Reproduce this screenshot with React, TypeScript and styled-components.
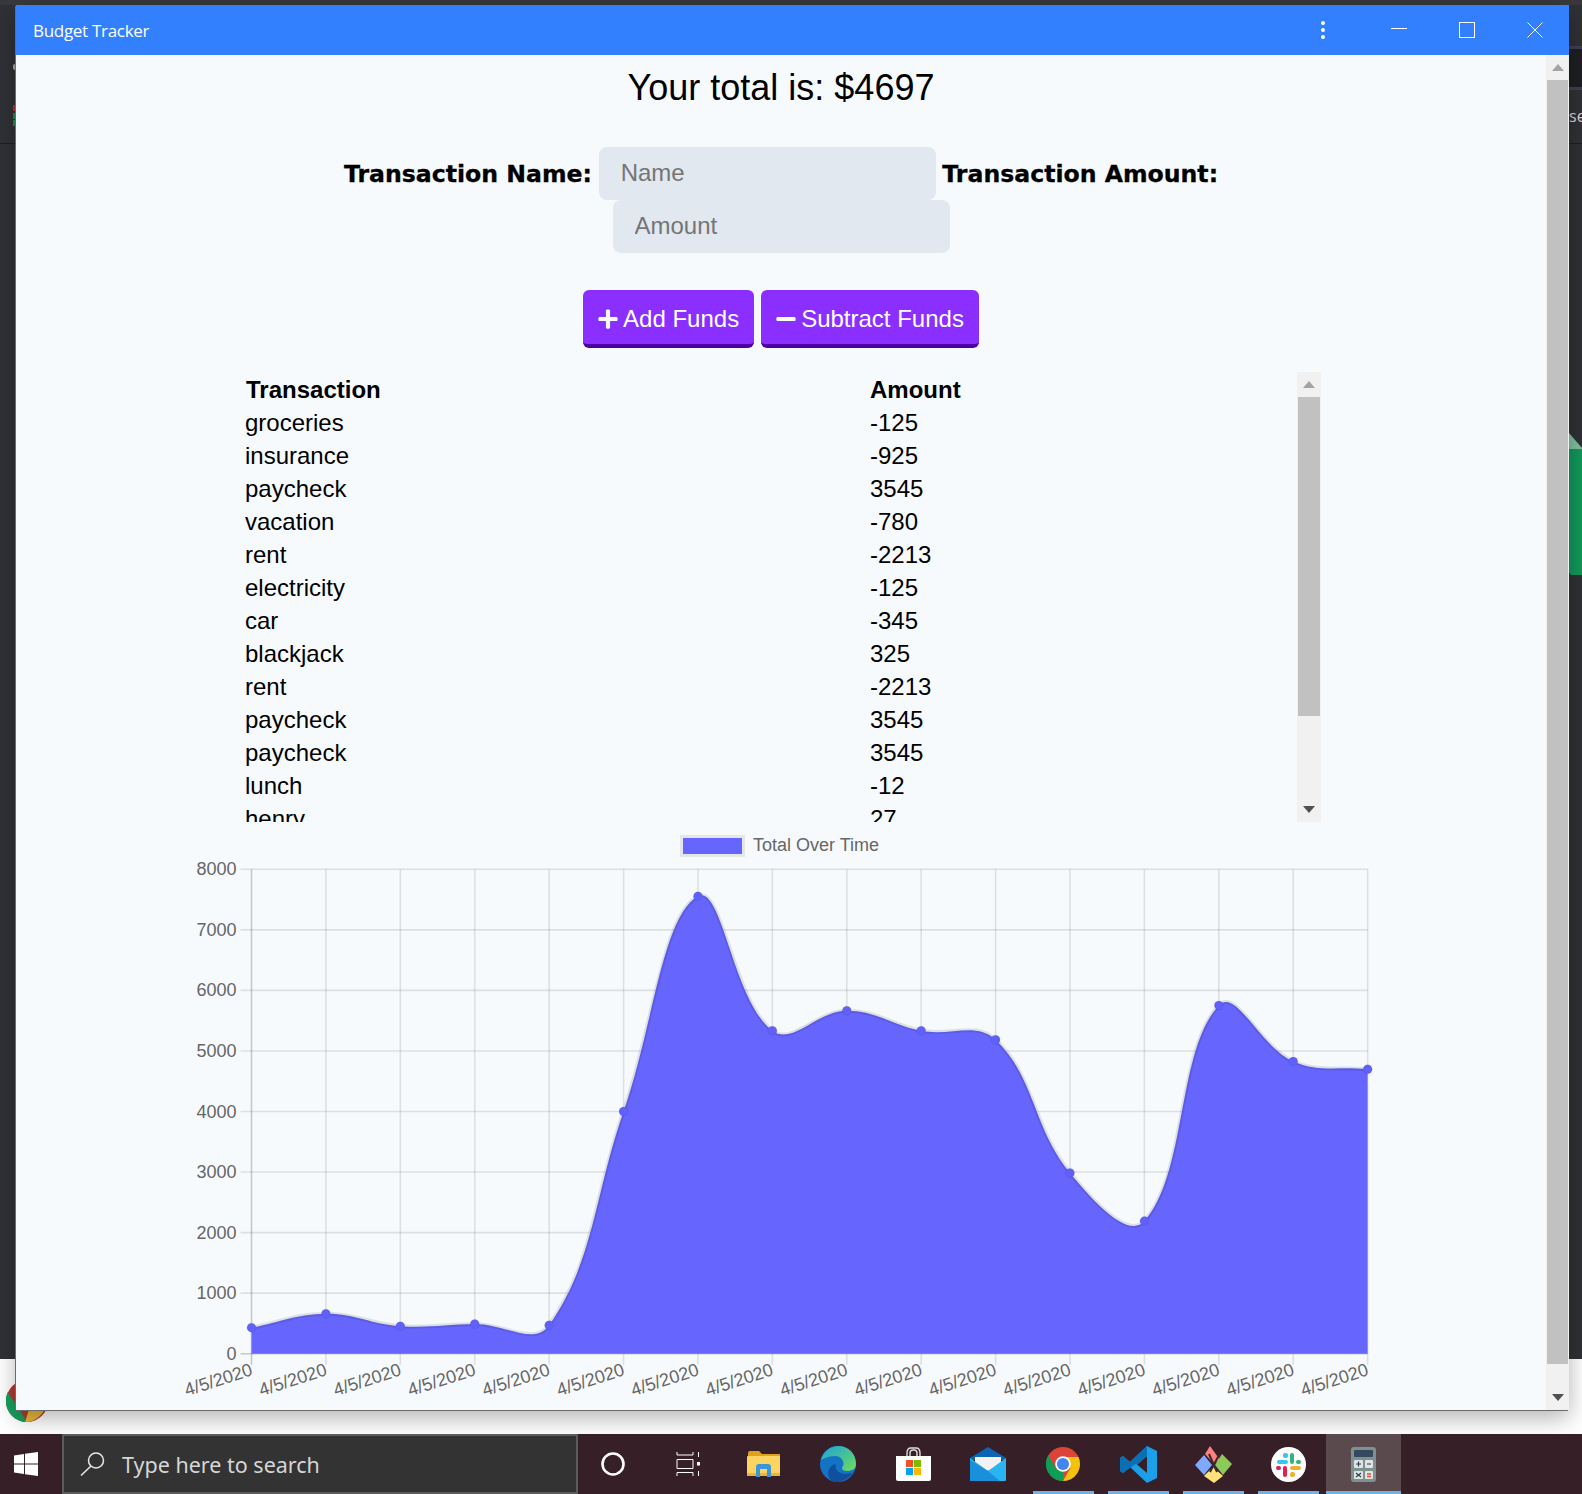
import React from "react";
import styled, { createGlobalStyle } from "styled-components";
import { FaPlus, FaMinus } from "react-icons/fa";

const Global = createGlobalStyle`
  html, body { margin: 0; padding: 0; background: #fff; }
  * { box-sizing: border-box; }
`;

const Desktop = styled.div`
  position: relative;
  width: 1582px;
  height: 1494px;
  overflow: hidden;
  display: flex;
  flex-direction: column;
  background: #fff;
  font-family: "Liberation Sans", Arial, sans-serif;
`;
const Workspace = styled.div`
  position: relative;
  flex: 1;
`;
const Backdrop = styled.div`
  position: absolute;
  left: 0;
  top: 0;
  width: 100%;
  height: 1359px;
  background: #2f3136;
`;
const BackTopBar = styled.div`
  position: absolute;
  left: 0;
  top: 0;
  width: 100%;
  height: 5px;
  background: #37393d;
`;
const BackSideLine = styled.div`
  position: absolute;
  left: 0;
  top: 143px;
  width: 100%;
  height: 1px;
  background: #1d1e20;
`;
const BackPanel = styled.div`
  position: absolute;
  right: 0;
  top: 46px;
  width: 13px;
  height: 44px;
  background: #1e1f22;
  border-top: 3px solid #3d4250;
  border-bottom: 3px solid #3d4250;
`;
const BackText = styled.div`
  position: absolute;
  right: -3px;
  top: 105px;
  width: 16px;
  overflow: hidden;
  font: 16px "Open Sans", sans-serif;
  color: #d6d6d6;
`;
const BackTick = styled.div<{ $top: number; $color: string }>`
  position: absolute;
  left: 13px;
  top: ${(p) => p.$top}px;
  width: 3px;
  height: 6px;
  background: ${(p) => p.$color};
`;
const BackDot = styled.div`
  position: absolute;
  left: 13px;
  top: 64px;
  width: 4px;
  height: 6px;
  background: #a8a8a8;
  border-radius: 2px 0 0 2px;
`;
const GreenTab = styled.div`
  position: absolute;
  right: 0;
  top: 433px;
  width: 13px;
  height: 142px;
  background: linear-gradient(to bottom, #7fbf9f 0, #7fbf9f 16px, #12985a 16px);
  clip-path: polygon(0 0, 100% 15px, 100% 100%, 2px 100%, 0 98%);
`;
const ChromeBehind = styled.svg`
  position: absolute;
  left: 6px;
  top: 1380px;
`;

const Window = styled.div`
  position: absolute;
  left: 16px;
  top: 5px;
  width: 1553px;
  height: 1405px;
  display: flex;
  flex-direction: column;
  background: #f7fafc;
  box-shadow: -1px 1px 0 #6b6b6b, 0 8px 22px rgba(0, 0, 0, 0.3);
`;
const TitleBar = styled.div`
  height: 50px;
  flex: none;
  display: flex;
  align-items: center;
  background: #3280fe;
  color: #fff;
`;
const TitleText = styled.div`
  flex: 1;
  padding: 0 0 0 17px;
  font: 400 17px "Open Sans", sans-serif;
  letter-spacing: -0.3px;
`;
const TitleIcon = styled.svg`
  display: block;
  flex: none;
`;
const Dots = styled(TitleIcon)`
  margin-right: 65px;
`;
const WinBtn = styled(TitleIcon)`
  margin-right: 52px;
`;
const LastBtn = styled(TitleIcon)`
  margin-right: 26px;
`;
const WinBody = styled.div`
  flex: 1;
  min-height: 0;
  display: flex;
`;
const Content = styled.main`
  flex: 1;
  min-width: 0;
  display: flex;
  flex-direction: column;
  align-items: center;
  color: #000;
`;
const Total = styled.h1`
  margin: 12px 0 0;
  font-size: 36px;
  line-height: 41px;
  font-weight: 400;
`;
const Form = styled.form`
  width: 1000px;
  margin-top: 39px;
  text-align: center;
  font-size: 24px;
  line-height: 0;
`;
const Label = styled.label`
  display: inline-block;
  vertical-align: middle;
  padding-top: 1px;
  height: 53px;
  font: bold 23.6px "DejaVu Sans", sans-serif;
  line-height: 53px;
  -webkit-text-stroke: 0.3px #000;
`;
const Input = styled.input`
  display: inline-block;
  vertical-align: middle;
  width: 337px;
  height: 53px;
  padding: 0 22px 1px;
  border: 0;
  border-radius: 8px;
  background: #e2e8f0;
  font: 24px "Liberation Sans", Arial, sans-serif;
  outline: none;
  &::placeholder { color: #757575; opacity: 1; }
`;
const Buttons = styled.div`
  display: flex;
  gap: 7px;
  margin-top: 37px;
`;
const Button = styled.button`
  display: flex;
  align-items: center;
  gap: 4.5px;
  height: 58px;
  padding: 3px 15px 0 13.5px;
  border: 0;
  border-bottom: 4px solid #4c00a4;
  border-radius: 6px;
  background: #8a2fff;
  color: #fff;
  font: 24px "Liberation Sans", Arial, sans-serif;
`;
const Ledger = styled.section`
  width: 1080px;
  height: 450px;
  margin-top: 24px;
  display: flex;
  flex: none;
`;
const LedgerRows = styled.div`
  flex: 1;
  min-width: 0;
  overflow: hidden;
  padding-top: 1px;
`;
const Row = styled.div`
  display: grid;
  grid-template-columns: 625px 1fr;
  height: 33px;
  padding-left: 4px;
  font-size: 24px;
  line-height: 33px;
`;
const HeadRow = styled(Row)`
  font-weight: 700;
  padding-left: 5px;
  grid-template-columns: 624px 1fr;
`;
const Scrollbar = styled.div<{ $w: number }>`
  flex: none;
  width: ${(p) => p.$w}px;
  display: flex;
  flex-direction: column;
  background: #f1f1f1;
`;
const ScrollArrow = styled.div<{ $h: number }>`
  flex: none;
  height: ${(p) => p.$h}px;
  display: flex;
  align-items: center;
  justify-content: center;
`;
const Thumb = styled.div<{ $h: number }>`
  flex: none;
  height: ${(p) => p.$h}px;
  margin: 0 1px;
  background: #c1c1c1;
`;
const Spacer = styled.div`
  flex: 1;
`;
const ChartSvg = styled.svg`
  display: block;
  flex: none;
  font-family: "Liberation Sans", Arial, sans-serif;
`;

const Taskbar = styled.footer`
  flex: none;
  height: 60px;
  display: flex;
  background: #361f27;
  position: relative;
`;
const StartSlot = styled.div`
  width: 62px;
  display: flex;
  align-items: center;
  justify-content: center;
  padding-right: 10px;
`;
const Search = styled.div`
  width: 516px;
  display: flex;
  align-items: center;
  gap: 17px;
  padding-left: 16px;
  background: #333333;
  border: 2px solid #5c5c5c;
  color: #d6d6d6;
  font: 21.5px "Noto Sans", "Open Sans", sans-serif;
  white-space: nowrap;
`;
const Slots = styled.div`
  display: flex;
  margin-left: -2.5px;
`;
const Slot = styled.div<{ $on?: boolean; $active?: boolean }>`
  position: relative;
  width: 75px;
  display: flex;
  align-items: center;
  justify-content: center;
  background: ${(p) => (p.$active ? "#5b4a4d" : "transparent")};
  &::after {
    content: "";
    display: ${(p) => (p.$on ? "block" : "none")};
    position: absolute;
    left: ${(p) => (p.$active ? 0 : 7)}px;
    right: ${(p) => (p.$active ? 0 : 7)}px;
    bottom: 0;
    height: 3px;
    background: #6fb0e6;
  }
`;
const Icon = styled.svg`
  display: block;
`;

/* ---------- chart ---------- */
const X0 = 90.5;
const Y0 = 531.7;
const DX = 74.41;
const UNIT = 0.06055;
const DATA = [430, 661, 455, 490, 470, 4000, 7554, 5333, 5664, 5333, 5185, 2986, 2190, 5752, 4826, 4697];
const pts = DATA.map((v, i) => ({ x: X0 + i * DX, y: Y0 - v * UNIT }));

function splinePath() {
  const t = 0.4;
  const ctrl = pts.map((c, i) => {
    const p = pts[Math.max(0, i - 1)];
    const n = pts[Math.min(pts.length - 1, i + 1)];
    const d1 = Math.hypot(c.x - p.x, c.y - p.y);
    const d2 = Math.hypot(n.x - c.x, n.y - c.y);
    const s1 = d1 / (d1 + d2 || 1);
    const s2 = d2 / (d1 + d2 || 1);
    return {
      ax: c.x - t * s1 * (n.x - p.x),
      ay: c.y - t * s1 * (n.y - p.y),
      bx: c.x + t * s2 * (n.x - p.x),
      by: c.y + t * s2 * (n.y - p.y),
    };
  });
  let d = `M${pts[0].x} ${pts[0].y}`;
  for (let i = 1; i < pts.length; i++) {
    d += ` C${ctrl[i - 1].bx} ${ctrl[i - 1].by} ${ctrl[i].ax} ${ctrl[i].ay} ${pts[i].x} ${pts[i].y}`;
  }
  return d;
}

function Chart() {
  const line = splinePath();
  const right = X0 + 15 * DX;
  const top = Y0 - 8000 * UNIT;
  const grid = "rgba(0,0,0,0.1)";
  return (
    <ChartSvg width="1240" height="583" viewBox="0 0 1240 583">
      <rect x="520.5" y="14.5" width="62" height="19" fill="#6666ff" stroke="#e3e6ea" strokeWidth="3" />
      <text x="592" y="29" fontSize="18" fill="#666">Total Over Time</text>
      {Array.from({ length: 9 }, (_, i) => {
        const y = Y0 - i * 1000 * UNIT;
        return (
          <g key={i}>
            <line x1={X0 - 11} x2={right} y1={y} y2={y} strokeWidth="1.6" stroke={i === 0 ? "rgba(0,0,0,0.2)" : grid} />
            <text x={X0 - 15} y={y + 6} fontSize="18" fill="#666" textAnchor="end">{i * 1000}</text>
          </g>
        );
      })}
      {pts.map((p, i) => (
        <g key={i}>
          <line x1={p.x} x2={p.x} y1={top} y2={Y0 + 11} strokeWidth="1.6" stroke={i === 0 ? "rgba(0,0,0,0.2)" : grid} />
          <text
            x={0}
            y={0}
            fontSize="18"
            fill="#666"
            textAnchor="end"
            transform={`translate(${p.x + 2} ${Y0 + 21}) rotate(-18)`}
          >
            4/5/2020
          </text>
        </g>
      ))}
      <path d={`${line} L${right} ${Y0} L${X0} ${Y0} Z`} fill="#6666ff" />
      <path d={line} fill="none" stroke="rgba(0,0,0,0.1)" strokeWidth="4" />
      {pts.map((p, i) => (
        <circle key={i} cx={p.x} cy={p.y} r="4.5" fill="#6060fa" stroke="rgba(0,0,0,0.06)" />
      ))}
    </ChartSvg>
  );
}

const ROWS: [string, string][] = [
  ["groceries", "-125"],
  ["insurance", "-925"],
  ["paycheck", "3545"],
  ["vacation", "-780"],
  ["rent", "-2213"],
  ["electricity", "-125"],
  ["car", "-345"],
  ["blackjack", "325"],
  ["rent", "-2213"],
  ["paycheck", "3545"],
  ["paycheck", "3545"],
  ["lunch", "-12"],
  ["henry", "27"],
];

const UpArrow = () => (
  <svg width="12" height="7" viewBox="0 0 12 7"><path d="M6 0 12 7H0Z" fill="#a3a3a3" /></svg>
);
const DownArrow = () => (
  <svg width="12" height="7" viewBox="0 0 12 7"><path d="M0 0H12L6 7Z" fill="#505050" /></svg>
);

const ChromeGlyph = ({ size }: { size: number }) => (
  <Icon width={size} height={size} viewBox="0 0 48 48">
    <circle cx="24" cy="24" r="24" fill="#db4437" />
    <path d="M24 48A24 24 0 0 1 3.2 12L13.6 30 24 48Z" fill="#0f9d58" />
    <path d="M3.2 12 13.6 30 24 34 24 48 26 48A24 24 0 0 1 2 24Z" fill="#0f9d58" />
    <path d="M24 14H45.8A24 24 0 0 1 24 48L34.4 30Z" fill="#f4c20d" />
    <circle cx="24" cy="24" r="11" fill="#fff" />
    <circle cx="24" cy="24" r="8.6" fill="#4285f4" />
  </Icon>
);

export default function App() {
  return (
    <Desktop>
      <Global />
      <Workspace>
        <Backdrop>
          <BackTopBar />
          <BackSideLine />
          <BackPanel />
          <BackText>se</BackText>
          <BackDot />
          <BackTick $top={105} $color="#b5302e" />
          <BackTick $top={113} $color="#1f8a4d" />
          <BackTick $top={120} $color="#1f8a4d" />
          <GreenTab />
        </Backdrop>
        <ChromeBehind width="42" height="42" viewBox="0 0 48 48">
          <circle cx="24" cy="24" r="24" fill="#b23a30" />
          <path d="M24 48A24 24 0 0 1 2 14L14 32 24 48Z" fill="#16a05f" />
          <path d="M22 48A24 24 0 0 0 46 24L26 34Z" fill="#e8b93a" />
        </ChromeBehind>
        <Window>
          <TitleBar>
            <TitleText>Budget Tracker</TitleText>
            <Dots width="6" height="20" viewBox="0 0 6 20">
              <circle cx="3" cy="3" r="2" fill="#fff" />
              <circle cx="3" cy="10" r="2" fill="#fff" />
              <circle cx="3" cy="17" r="2" fill="#fff" />
            </Dots>
            <WinBtn width="16" height="16" viewBox="0 0 16 16">
              <path d="M0 6.5H16" stroke="#fff" fill="none" />
            </WinBtn>
            <WinBtn width="16" height="16" viewBox="0 0 16 16">
              <rect x="0.5" y="0.5" width="15" height="15" stroke="#fff" fill="none" />
            </WinBtn>
            <LastBtn width="16" height="16" viewBox="0 0 16 16">
              <path d="M0.5 0.5 15.5 15.5M15.5 0.5 0.5 15.5" stroke="#fff" fill="none" />
            </LastBtn>
          </TitleBar>
          <WinBody>
            <Content>
              <Total>Your total is: $4697</Total>
              <Form>
                <Label>Transaction Name:</Label> <Input placeholder="Name" />{" "}
                <Label>Transaction Amount:</Label> <Input placeholder="Amount" />
              </Form>
              <Buttons>
                <Button type="button"><FaPlus size={22} /> Add Funds</Button>
                <Button type="button"><FaMinus size={22} /> Subtract Funds</Button>
              </Buttons>
              <Ledger>
                <LedgerRows>
                  <HeadRow><span>Transaction</span><span>Amount</span></HeadRow>
                  {ROWS.map(([n, a], i) => (
                    <Row key={i}><span>{n}</span><span>{a}</span></Row>
                  ))}
                </LedgerRows>
                <Scrollbar $w={24}>
                  <ScrollArrow $h={25}><UpArrow /></ScrollArrow>
                  <Thumb $h={319} />
                  <Spacer />
                  <ScrollArrow $h={25}><DownArrow /></ScrollArrow>
                </Scrollbar>
              </Ledger>
              <Chart />
            </Content>
            <Scrollbar $w={23}>
              <ScrollArrow $h={25}><UpArrow /></ScrollArrow>
              <Thumb $h={1284} />
              <Spacer />
              <ScrollArrow $h={25}><DownArrow /></ScrollArrow>
            </Scrollbar>
          </WinBody>
        </Window>
      </Workspace>
      <Taskbar>
        <StartSlot>
          <Icon width="24" height="24" viewBox="0 0 24 24">
            <path d="M0 3.4 10 2V11.4H0ZM11 1.8 24 0V11.4H11ZM0 12.6H10V22L0 20.6ZM11 12.6H24V24L11 22.2Z" fill="#fff" />
          </Icon>
        </StartSlot>
        <Search>
          <Icon width="25" height="24" viewBox="0 0 25 24">
            <circle cx="16" cy="8.5" r="7.5" fill="none" stroke="#e8e8e8" strokeWidth="1.5" />
            <path d="M11 14 1 23.5" stroke="#e8e8e8" strokeWidth="1.5" />
          </Icon>
          Type here to search
        </Search>
        <Slots>
          <Slot>
            <Icon width="24" height="24" viewBox="0 0 24 24">
              <circle cx="12" cy="12" r="10.5" fill="none" stroke="#fff" strokeWidth="2.6" />
            </Icon>
          </Slot>
          <Slot>
            <Icon width="25" height="24" viewBox="0 0 25 24">
              <path d="M1 0V3H17V0M1 7.5H17V16.5H1ZM1 24V20.5H17V24M22.5 0V5M22.5 19V24" stroke="#fff" fill="none" strokeWidth="1" />
              <rect x="21" y="10" width="3" height="3.500" fill="#fff" />
            </Icon>
          </Slot>
          <Slot>
            <Icon width="33" height="26" viewBox="0 0 33 26">
              <path d="M1 2Q1 0 3 0H12L15 3H33V7H1Z" fill="#e0a21a" />
              <rect x="0" y="5" width="33" height="19" rx="1" fill="#fcd462" />
              <rect x="0" y="22" width="33" height="3" fill="#e9b63a" />
              <path d="M9 26V16Q9 13 12 13H21Q24 13 24 16V26H20V18H13V26Z" fill="#3b95d9" />
            </Icon>
          </Slot>
          <Slot>
            <Icon width="36" height="36" viewBox="0 0 36 36">
              <defs>
                <linearGradient id="edgeA" x1="0" y1="0" x2="1" y2="1">
                  <stop offset="0" stopColor="#1aa3d8" />
                  <stop offset="1" stopColor="#6fdc5c" />
                </linearGradient>
              </defs>
              <circle cx="18" cy="18" r="18" fill="#1473c4" />
              <path d="M1 14C4 4 12 0 18 0 29 0 36 8 36 18 36 23 32 25 27 25 22 25 21 22 23 20 25 17 22 10 15 10 8 10 3 13 1 14Z" fill="url(#edgeA)" />
              <path d="M14 36C6 33 6 20 16 18 14 24 19 30 33 27 28 33 20 37 14 36Z" fill="#0f4f9e" />
            </Icon>
          </Slot>
          <Slot>
            <Icon width="35" height="34" viewBox="0 0 35 34">
              <path d="M11 10V6Q11 1 15 1H20Q24 1 24 6V10M14 10V6Q14 3 17 3H18Q21 3 21 6V10" fill="none" stroke="#ddd" strokeWidth="1.4" />
              <path d="M0 9H35V32Q35 34 33 34H2Q0 34 0 32Z" fill="#fff" />
              <rect x="10" y="13" width="7" height="7" fill="#f25022" />
              <rect x="18" y="13" width="7" height="7" fill="#7fba00" />
              <rect x="10" y="21" width="7" height="7" fill="#00a4ef" />
              <rect x="18" y="21" width="7" height="7" fill="#ffb900" />
            </Icon>
          </Slot>
          <Slot>
            <Icon width="36" height="34" viewBox="0 0 36 34">
              <path d="M0 11 18 0 36 11V13H0Z" fill="#0b64b4" />
              <path d="M5 10H31V18L18 24 5 18Z" fill="#f2f2f2" />
              <path d="M0 11 18 24 36 11V33Q36 34 35 34H1Q0 34 0 33Z" fill="#29b6f0" />
              <path d="M0 34V13L18 24 30 34Z" fill="#1a8fdc" />
            </Icon>
          </Slot>
          <Slot $on>
            <ChromeGlyph size={34} />
          </Slot>
          <Slot $on>
            <Icon width="37" height="37" viewBox="0 0 37 37">
              <path d="M27 0 37 5V32L27 37 10 21 3 27 0 25V12L3 10 10 16ZM27 10 17 18.500 27 27Z" fill="#1a9fe8" />
              <path d="M27 0V10L17 18.500 10 16Z" fill="#0e77bf" />
              <path d="M0 25 3 27 27 10V0L10 16 3 10 0 12Z" fill="#0a6fb5" />
            </Icon>
          </Slot>
          <Slot $on>
            <Icon width="37" height="37" viewBox="0 0 37 37">
              <path d="M10 8 15 0 25 14 19 18Z" fill="#ff7f7f" />
              <path d="M9 9 0 19 9 29 17 19Z" fill="#7fa9ff" />
              <path d="M27 8 37 18 28 29 20 19Z" fill="#8cc85a" />
              <path d="M9 30 18 21 28 30 19 37Z" fill="#ffe27a" />
              <path d="M14 8 22 26M24 9 15 26" stroke="#3a2a2a" strokeWidth="2" />
            </Icon>
          </Slot>
          <Slot $on>
            <Icon width="35" height="35" viewBox="0 0 35 35">
              <circle cx="17.500" cy="17.500" r="17.500" fill="#fff" />
              <rect x="6" y="13" width="11" height="4" rx="2" fill="#36c5f0" />
              <rect x="12" y="6" width="5" height="5" rx="2" fill="#36c5f0" />
              <rect x="19" y="6" width="4" height="11" rx="2" fill="#2eb67d" />
              <rect x="25" y="13" width="5" height="4" rx="2" fill="#2eb67d" />
              <rect x="19" y="19" width="11" height="4" rx="2" fill="#ecb22e" />
              <rect x="19" y="25" width="5" height="5" rx="2" fill="#ecb22e" />
              <rect x="12" y="19" width="4" height="11" rx="2" fill="#e01e5a" />
              <rect x="5" y="19" width="5" height="4" rx="2" fill="#e01e5a" />
            </Icon>
          </Slot>
          <Slot $on $active>
            <Icon width="25" height="35" viewBox="0 0 25 35">
              <rect width="25" height="35" rx="3" fill="#7f9090" />
              <rect x="3" y="3" width="19" height="7" rx="1" fill="#34495e" />
              <rect x="3" y="13" width="9" height="8" rx="1" fill="#dfe5e5" />
              <rect x="14" y="13" width="8" height="8" rx="1" fill="#dfe5e5" />
              <rect x="3" y="24" width="9" height="8" rx="1" fill="#dfe5e5" />
              <rect x="14" y="24" width="8" height="8" rx="1" fill="#dfe5e5" />
              <path d="M5 17H10M7.500 14.500V19.500M16 17H20M5 26 10 30M10 26 5 30" stroke="#2c3e50" strokeWidth="1.2" />
              <path d="M16 27H20M16 29.500H20" stroke="#e74c3c" strokeWidth="1.4" />
            </Icon>
          </Slot>
        </Slots>
      </Taskbar>
    </Desktop>
  );
}
